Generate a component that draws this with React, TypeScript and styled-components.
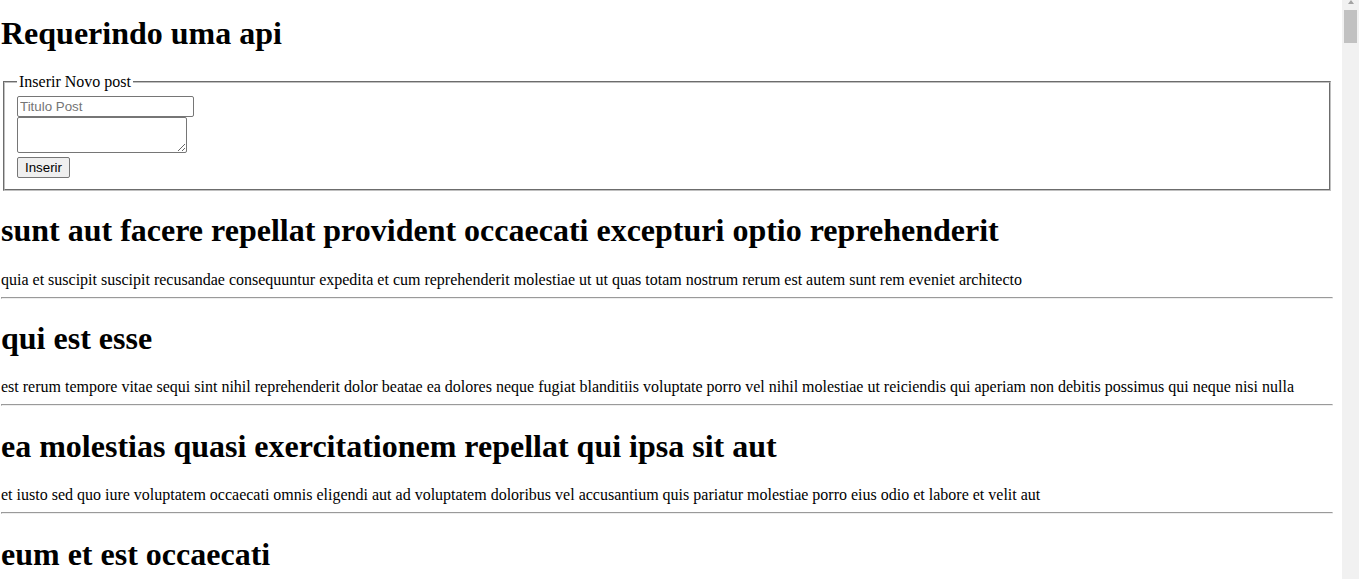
import React, { useState } from "react";
import styled, { createGlobalStyle } from "styled-components";

const GlobalStyle = createGlobalStyle`
  html {
    scrollbar-width: none;
  }
  html::-webkit-scrollbar {
    display: none;
  }
  body {
    margin: 0;
    background: #ffffff;
    color: #000000;
    font-family: "Liberation Serif", "Times New Roman", serif;
    font-size: 16px;
  }
`;

const Page = styled.div`
  width: 1332px;
  margin-left: 1px;
`;

const Title = styled.h1`
  font-size: 32px;
  font-weight: bold;
  margin: 14.6px 0 21.44px;
`;

const Fieldset = styled.fieldset`
  margin: 0 2px;
  padding: 4.6px 12px 11px;
  border: 2px groove rgb(192, 192, 192);
  min-width: 0;
`;

const Legend = styled.legend`
  padding: 0 2px;
  font-size: 16px;
`;

const Fields = styled.div`
  display: flex;
  flex-direction: column;
  align-items: flex-start;
`;

const controlBase = `
  box-sizing: border-box;
  font-family: "Liberation Sans", Arial, sans-serif;
  font-size: 13.333px;
  color: #000000;
  border: 1px solid #767676;
  border-radius: 2px;
  margin: 0;
`;

const TextInput = styled.input`
  ${controlBase}
  width: 177px;
  height: 21px;
  padding: 1px 2px;
  background: #ffffff;
  &::placeholder {
    color: #757575;
  }
`;

const TextArea = styled.textarea`
  ${controlBase}
  width: 170px;
  height: 36px;
  padding: 2px;
  background: #ffffff;
`;

const Button = styled.button`
  ${controlBase}
  margin-top: 4px;
  width: 53px;
  height: 21px;
  padding: 1px 6px;
  background: #efefef;
  cursor: pointer;
  &:hover {
    background: #e5e5e5;
  }
`;

const PostTitle = styled.h1`
  font-size: 32px;
  font-weight: bold;
  margin: 21.44px 0;
`;

const PostBody = styled.div`
  font-size: 16px;
  line-height: normal;
`;

const Divider = styled.hr`
  margin: 8px 0;
  border: 1px inset;
  color: gray;
  overflow: hidden;
`;

const ScrollTrack = styled.div`
  position: fixed;
  top: 0;
  right: 0;
  bottom: 0;
  width: 17px;
  background: #f1f1f1;
  display: flex;
  flex-direction: column;
  align-items: center;
`;

const ScrollArrow = styled.div`
  height: 10px;
  width: 100%;
  display: flex;
  justify-content: center;
  align-items: flex-start;
  &::before {
    content: "";
    width: 0;
    height: 0;
    border-left: 3.5px solid transparent;
    border-right: 3.5px solid transparent;
    border-bottom: 4px solid #a3a3a3;
  }
`;

const ScrollThumb = styled.div`
  width: 13px;
  height: 33px;
  background: #c1c1c1;
`;

interface IPost {
  id: number;
  title: string;
  body: string;
}

const initialPosts: Array<IPost> = [
  {
    id: 1,
    title:
      "sunt aut facere repellat provident occaecati excepturi optio reprehenderit",
    body: "quia et suscipit\nsuscipit recusandae consequuntur expedita et cum\nreprehenderit molestiae ut ut quas totam\nnostrum rerum est autem sunt rem eveniet architecto",
  },
  {
    id: 2,
    title: "qui est esse",
    body: "est rerum tempore vitae\nsequi sint nihil reprehenderit dolor beatae ea dolores neque\nfugiat blanditiis voluptate porro vel nihil molestiae ut reiciendis\nqui aperiam non debitis possimus qui neque nisi nulla",
  },
  {
    id: 3,
    title: "ea molestias quasi exercitationem repellat qui ipsa sit aut",
    body: "et iusto sed quo iure\nvoluptatem occaecati omnis eligendi aut ad\nvoluptatem doloribus vel accusantium quis pariatur\nmolestiae porro eius odio et labore et velit aut",
  },
  {
    id: 4,
    title: "eum et est occaecati",
    body: "ullam et saepe reiciendis voluptatem adipisci\nsit amet autem assumenda provident rerum culpa\nquis hic commodi nesciunt rem tenetur doloremque ipsam iure\nquis sunt voluptatem rerum illo velit",
  },
  {
    id: 5,
    title: "nesciunt quas odio",
    body: "repudiandae veniam quaerat sunt sed\nalias aut fugiat sit autem sed est\nvoluptatem omnis possimus esse voluptatibus quis\nest aut tenetur dolor neque",
  },
  {
    id: 6,
    title: "dolorem eum magni eos aperiam quia",
    body: "ut aspernatur corporis harum nihil quis provident sequi\nmollitia nobis aliquid molestiae\nperspiciatis et ea nemo ab reprehenderit accusantium quas\nvoluptate dolores velit et doloremque molestiae",
  },
];

const App: React.FC = () => {
  const [posts, setPosts] = useState<Array<IPost>>(initialPosts);
  const [title, setTitle] = useState("");
  const [body, setBody] = useState("");

  const handleInsert = () => {
    if (!title) return;
    setPosts([{ id: Date.now(), title, body }, ...posts]);
    setTitle("");
    setBody("");
  };

  return (
    <>
      <GlobalStyle />
      <Page>
        <Title>Requerindo uma api</Title>
        <Fieldset>
          <Legend>Inserir Novo post</Legend>
          <Fields>
            <TextInput
              placeholder="Titulo Post"
              value={title}
              onChange={(e) => setTitle(e.target.value)}
            />
            <TextArea value={body} onChange={(e) => setBody(e.target.value)} />
            <Button onClick={handleInsert}>Inserir</Button>
          </Fields>
        </Fieldset>
        {posts.map((post) => (
          <div key={post.id}>
            <PostTitle>{post.title}</PostTitle>
            <PostBody>{post.body}</PostBody>
            <Divider />
          </div>
        ))}
      </Page>
      <ScrollTrack>
        <ScrollArrow />
        <ScrollThumb />
      </ScrollTrack>
    </>
  );
};

export default App;
